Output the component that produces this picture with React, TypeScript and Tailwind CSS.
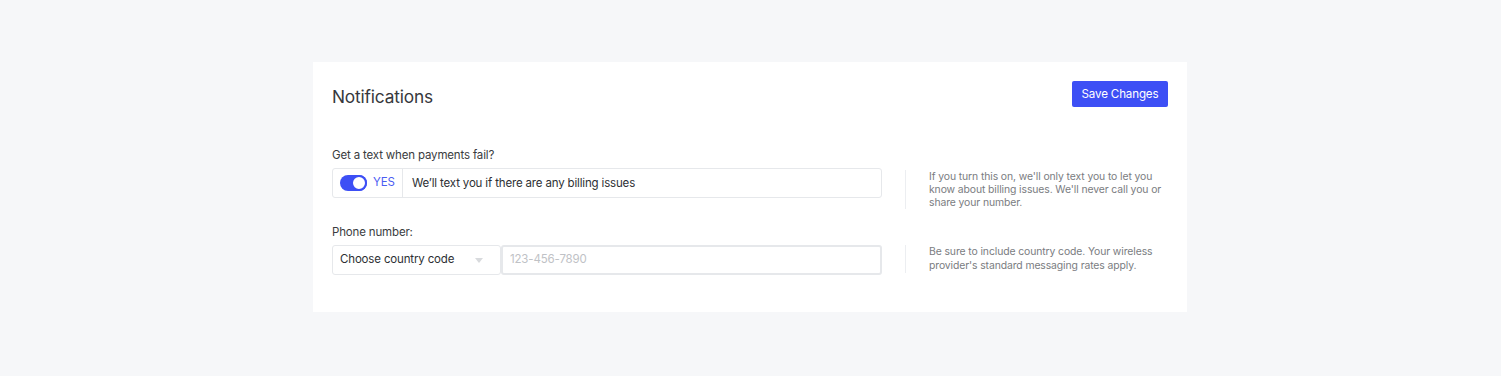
import { useState } from "react";

const HelpText = ({ children, className }: { children: React.ReactNode; className: string }) => (
  <div className={`w-[263px] border-l border-[#eceef1] pl-[23px] ${className}`}>
    <p className="text-[10.4px] tracking-[-0.01em] text-[#7a7c81]">{children}</p>
  </div>
);

const App = () => {
  const [enabled, setEnabled] = useState(true);

  return (
    <div
      className="min-h-[376px] bg-[#f6f7f9] pt-[62px] flex justify-center"
      style={{ fontFamily: "Inter, 'Noto Sans', sans-serif" }}
    >
      <div className="w-[874px] h-[250px] bg-white px-[19px] pt-[19px] ml-[-1px] tracking-[-0.01em]">
        {/* Header */}
        <div className="flex items-start justify-between">
          <h1 className="text-[17.3px] leading-[22px] mt-[5px] text-[#36383c]">Notifications</h1>
          <button className="h-[26px] w-[96px] pt-[1px] rounded-[2px] bg-[#3d4ff5] text-white text-[11.6px] leading-none">
            Save Changes
          </button>
        </div>

        {/* Text on failed payments */}
        <div className="mt-[40px] flex items-start gap-[23px]">
          <div className="w-[550px]">
            <label className="block text-[11.5px] leading-[15px] text-[#3a3c40] mb-[5px]">
              Get a text when payments fail?
            </label>
            <div className="h-[30px] flex items-stretch border border-[#e6e8eb] rounded-[3px]">
              <button
                onClick={() => setEnabled(!enabled)}
                className="w-[70px] flex items-center gap-[6px] pl-[7px] border-r border-[#e6e8eb]"
              >
                <span className="relative w-[27px] h-[16px] rounded-full bg-[#3d4ff5]">
                  <span className="absolute right-0 top-0 w-[16px] h-[16px] rounded-full bg-white border-2 border-[#3d4ff5]" />
                </span>
                <span className="text-[11.5px] text-[#4b5cf2]">{enabled ? "YES" : "NO"}</span>
              </button>
              <div className="flex items-center pl-[9px] pt-[1px] text-[11.5px] text-[#2d2f33]">
                We’ll text you if there are any billing issues
              </div>
            </div>
          </div>
          <HelpText className="mt-[22px] leading-[13px]">
            If you turn this on, we'll only text you to let you know about billing issues. We'll never call you or
            share your number.
          </HelpText>
        </div>

        {/* Phone number */}
        <div className="mt-[16px] flex items-start gap-[23px]">
          <div className="w-[550px]">
            <label className="block text-[11.5px] leading-[15px] text-[#3a3c40] mb-[5px]">Phone number:</label>
            <div className="flex h-[30px]">
              <div className="w-[169px] flex items-center justify-between pl-[7px] pr-[17px] border border-[#e6e8eb] rounded-[3px] text-[11.5px] text-[#2d2f33]">
                <span>Choose country code</span>
                <svg width="8" height="5" viewBox="0 0 8 5">
                  <path d="M0 0h8L4 5z" fill="#d8dadd" />
                </svg>
              </div>
              <input
                placeholder="123-456-7890"
                className="flex-1 px-[7px] border-2 border-[#e6e8eb] rounded-[3px] text-[11.5px] text-[#2d2f33] placeholder:text-[#c0c2c6] outline-none"
              />
            </div>
          </div>
          <HelpText className="mt-[20px] leading-[14px]">
            Be sure to include country code. Your wireless provider's standard messaging rates apply.
          </HelpText>
        </div>
      </div>
    </div>
  );
};

export default App;
